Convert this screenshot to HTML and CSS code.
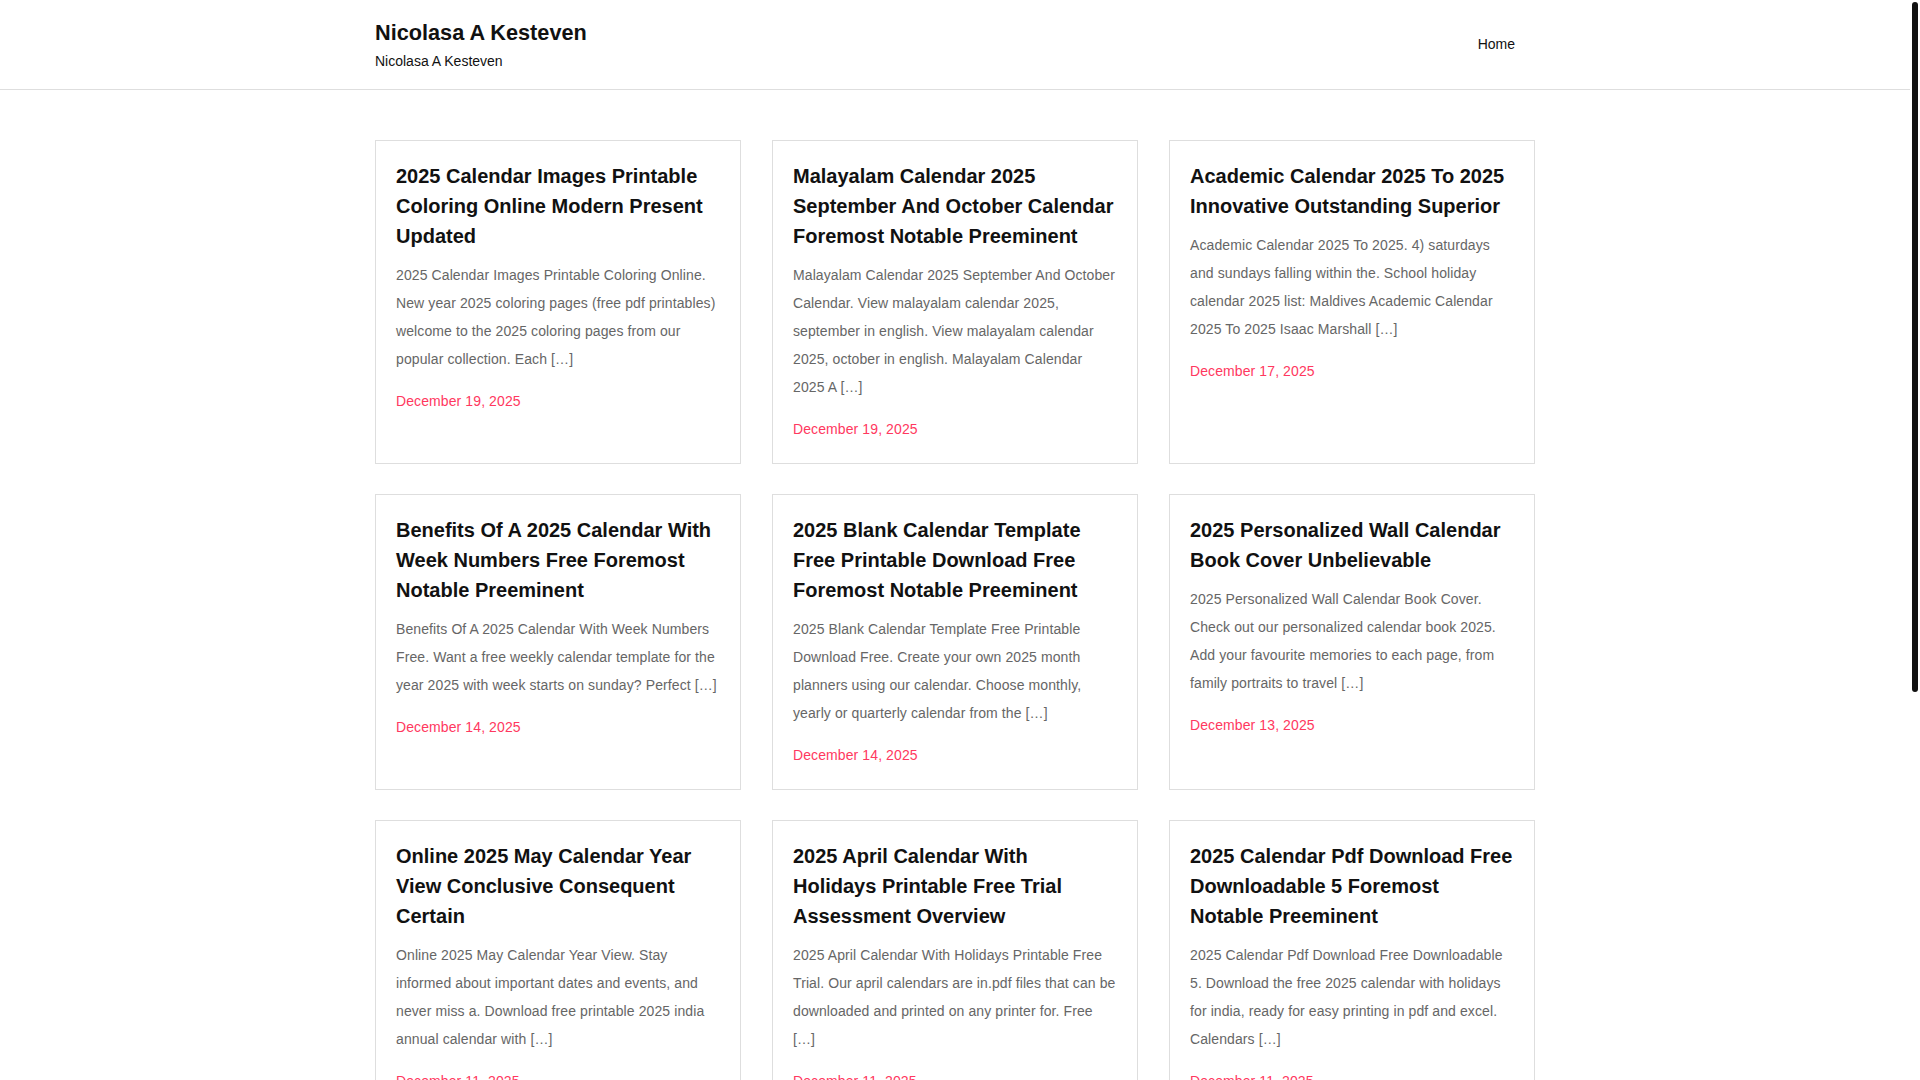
FILE: index.html
```html
<!DOCTYPE html>
<html>
    <head>
        <meta charset="utf-8">
        <title>Nicolasa A Kesteven</title>
        <link rel="stylesheet" href="styles.css">
    </head>
    <body>
        <header class="site-header">
            <div class="container header-inner">
                <div class="brand">
                    <h1 class="site-title"><a href="#">Nicolasa A Kesteven</a></h1>
                    <p class="site-desc">Nicolasa A Kesteven</p>
                </div>
                <nav class="main-nav">
                    <a href="#" class="nav-link">Home</a>
                </nav>
            </div>
        </header>
        <main class="container posts">
            <article class="post">
                <h2 class="post-title"><a href="#">2025 Calendar Images Printable Coloring Online Modern Present Updated</a></h2>
                <p class="post-excerpt">2025 Calendar Images Printable Coloring Online. New year 2025 coloring pages (free pdf printables) welcome to the 2025 coloring pages from our popular collection. Each [&hellip;]</p>
                <span class="post-date">December 19, 2025</span>
            </article>
            <article class="post">
                <h2 class="post-title"><a href="#">Malayalam Calendar 2025 September And October Calendar Foremost Notable Preeminent</a></h2>
                <p class="post-excerpt">Malayalam Calendar 2025 September And October Calendar. View malayalam calendar 2025, september in english. View malayalam calendar 2025, october in english. Malayalam Calendar 2025 A [&hellip;]</p>
                <span class="post-date">December 19, 2025</span>
            </article>
            <article class="post">
                <h2 class="post-title"><a href="#">Academic Calendar 2025 To 2025 Innovative Outstanding Superior</a></h2>
                <p class="post-excerpt">Academic Calendar 2025 To 2025. 4) saturdays and sundays falling within the. School holiday calendar 2025 list: Maldives Academic Calendar 2025 To 2025 Isaac Marshall [&hellip;]</p>
                <span class="post-date">December 17, 2025</span>
            </article>
            <article class="post">
                <h2 class="post-title"><a href="#">Benefits Of A 2025 Calendar With Week Numbers Free Foremost Notable Preeminent</a></h2>
                <p class="post-excerpt">Benefits Of A 2025 Calendar With Week Numbers Free. Want a free weekly calendar template for the year 2025 with week starts on sunday? Perfect [&hellip;]</p>
                <span class="post-date">December 14, 2025</span>
            </article>
            <article class="post">
                <h2 class="post-title"><a href="#">2025 Blank Calendar Template Free Printable Download Free Foremost Notable Preeminent</a></h2>
                <p class="post-excerpt">2025 Blank Calendar Template Free Printable Download Free. Create your own 2025 month planners using our calendar. Choose monthly, yearly or quarterly calendar from the [&hellip;]</p>
                <span class="post-date">December 14, 2025</span>
            </article>
            <article class="post">
                <h2 class="post-title"><a href="#">2025 Personalized Wall Calendar Book Cover Unbelievable</a></h2>
                <p class="post-excerpt">2025 Personalized Wall Calendar Book Cover. Check out our personalized calendar book 2025. Add your favourite memories to each page, from family portraits to travel [&hellip;]</p>
                <span class="post-date">December 13, 2025</span>
            </article>
            <article class="post">
                <h2 class="post-title"><a href="#">Online 2025 May Calendar Year View Conclusive Consequent Certain</a></h2>
                <p class="post-excerpt">Online 2025 May Calendar Year View. Stay informed about important dates and events, and never miss a. Download free printable 2025 india annual calendar with [&hellip;]</p>
                <span class="post-date">December 11, 2025</span>
            </article>
            <article class="post">
                <h2 class="post-title"><a href="#">2025 April Calendar With<br>Holidays Printable Free Trial Assessment Overview</a></h2>
                <p class="post-excerpt">2025 April Calendar With Holidays Printable Free Trial. Our april calendars are in.pdf files that can be downloaded and printed on any printer for. Free [&hellip;]</p>
                <span class="post-date">December 11, 2025</span>
            </article>
            <article class="post">
                <h2 class="post-title"><a href="#">2025 Calendar Pdf Download Free Downloadable 5 Foremost Notable Preeminent</a></h2>
                <p class="post-excerpt">2025 Calendar Pdf Download Free Downloadable 5. Download the free 2025 calendar with holidays for india, ready for easy printing in pdf and excel. Calendars [&hellip;]</p>
                <span class="post-date">December 11, 2025</span>
            </article>
        </main>
        <div class="scroll-thumb"></div>
    </body>
</html>
```

FILE: styles.css
```css
body {
    margin: 0 10px 0 0;
    padding: 0;
    background-color: #fff;
    color: #111;
    font-family: "Liberation Sans", Arial, sans-serif;
    font-size: 14px;
}
a {
    color: inherit;
    text-decoration: none;
}
.container {
    width: 1160px;
    margin: 0 auto;
}
.site-header {
    border-bottom: 1px solid #dedede;
}
.header-inner {
    display: flex;
    justify-content: space-between;
    align-items: center;
    height: 89px;
}
.brand {
    padding-top: 1px;
}
.site-title {
    margin: 0 0 5px 0;
    font-size: 21.7px;
    line-height: 26px;
    font-weight: bold;
    color: #111;
}
.site-desc {
    margin: 0;
    font-size: 14px;
    line-height: 20px;
    color: #111;
}
.main-nav {
    padding-right: 20px;
    padding-bottom: 2px;
}
.nav-link {
    font-size: 14px;
    line-height: 20px;
    color: #111;
}
.posts {
    display: grid;
    grid-template-columns: repeat(3, 366px);
    gap: 30px 31px;
    padding-top: 50px;
    padding-bottom: 50px;
}
.post {
    border: 1px solid #dedede;
    padding: 20px;
}
.post-title {
    margin: 0 0 10px 0;
    font-size: 20px;
    line-height: 30px;
    font-weight: bold;
    color: #111;
}
.post-excerpt {
    margin: 0 0 14px 0;
    font-size: 14px;
    line-height: 28px;
    letter-spacing: 0.1px;
    color: #666;
}
.post-date {
    display: block;
    font-size: 14px;
    line-height: 28px;
    letter-spacing: 0.1px;
    color: #ff3860;
}
.scroll-thumb {
    position: fixed;
    top: 2px;
    right: 2px;
    width: 6px;
    height: 690px;
    border-radius: 3px;
    background-color: #111;
}
```
